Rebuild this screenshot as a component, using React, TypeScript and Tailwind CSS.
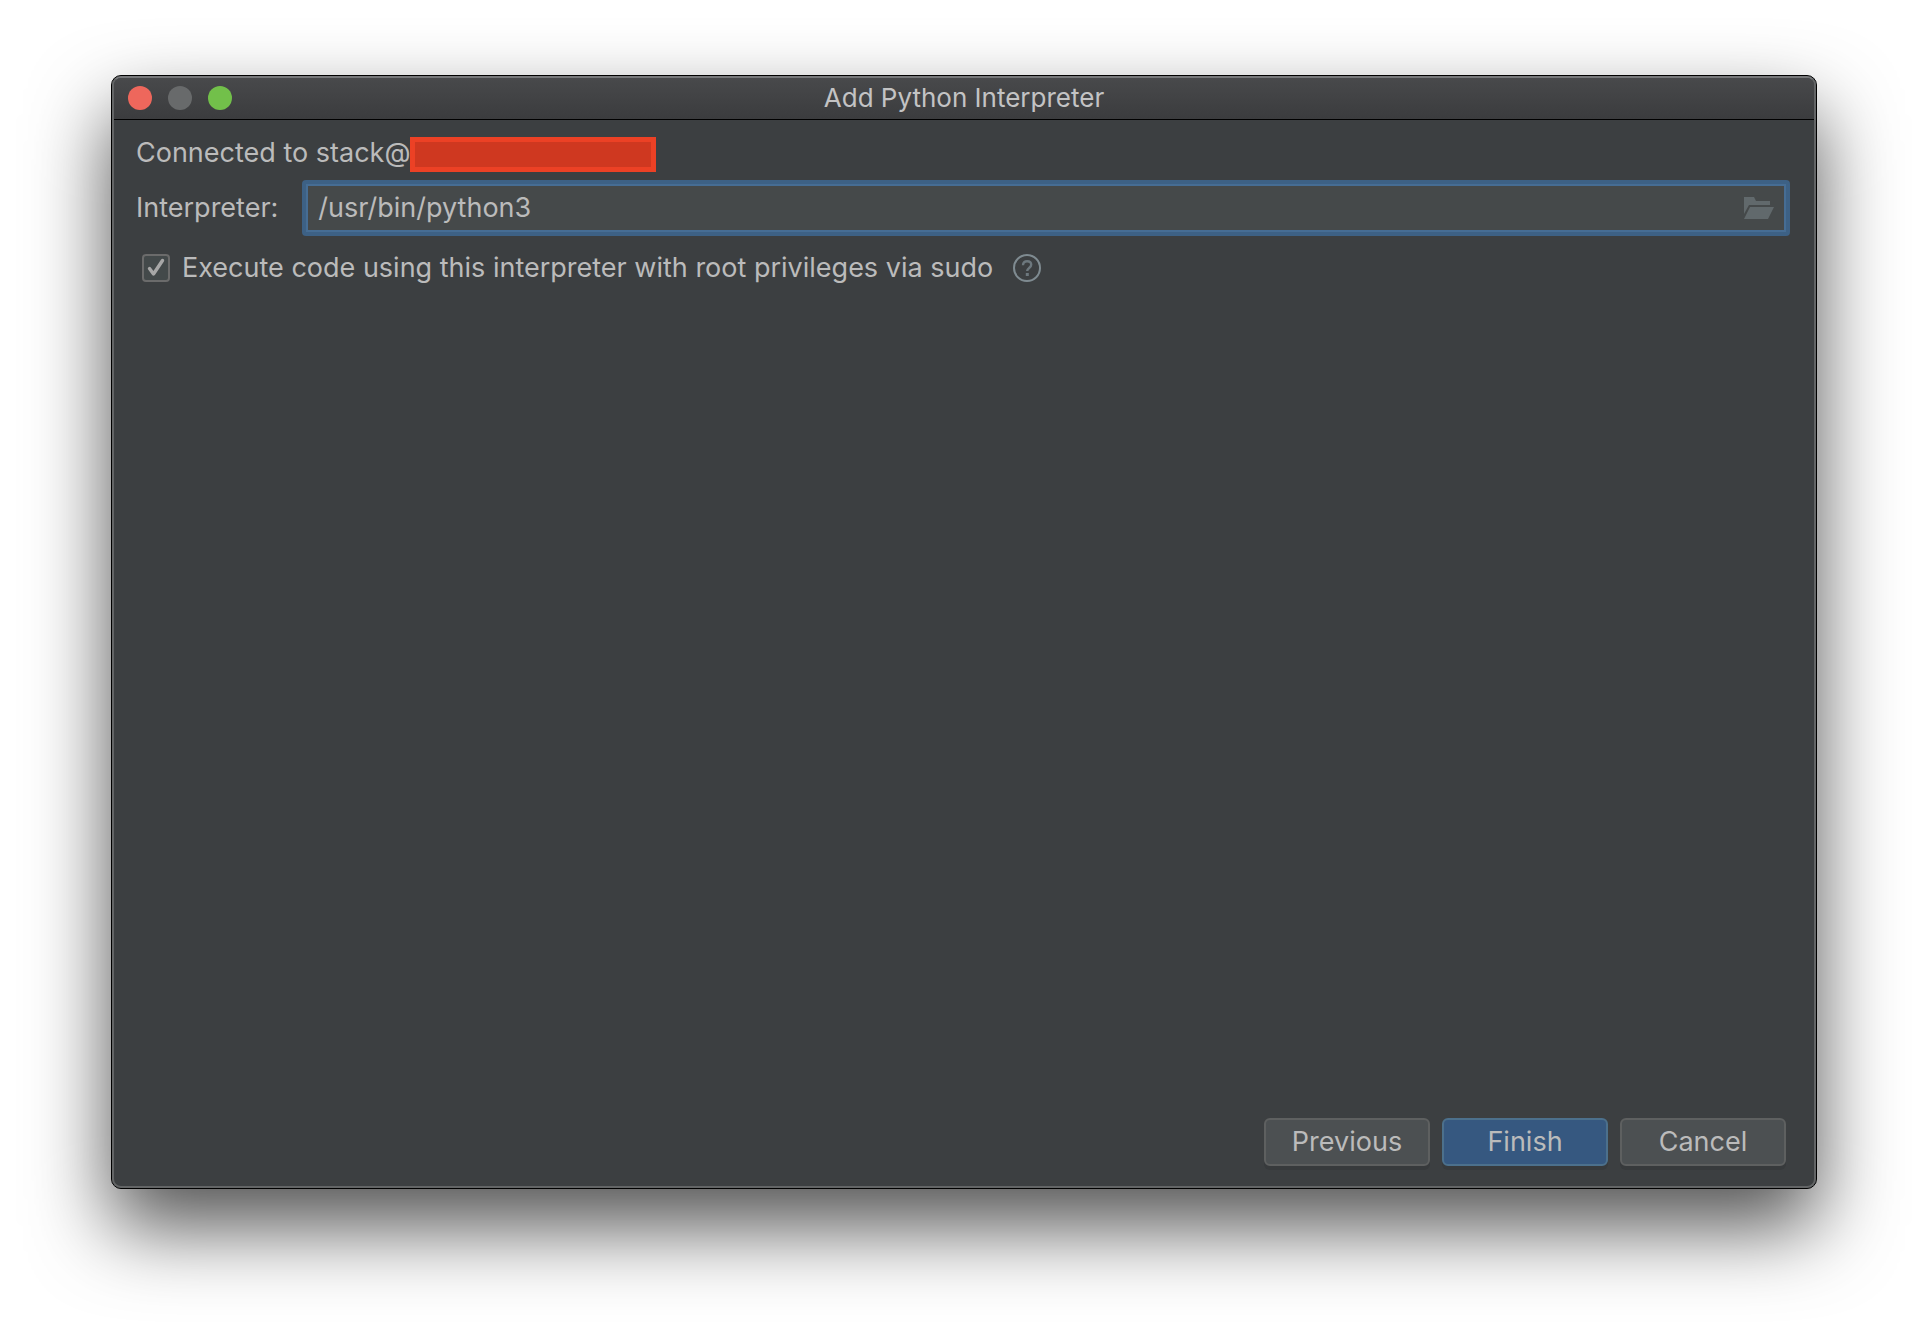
import { useState } from "react";

const FolderIcon = () => (
  <svg width="30" height="22" viewBox="0 0 30 22" fill="#61696c">
    <path d="M0 0h10l2 4h14v4H5L0 17z" />
    <path d="M6 10h24l-6 12H0z" />
  </svg>
);

const HelpIcon = () => (
  <svg width="28" height="28" viewBox="0 0 28 28" fill="none">
    <circle cx="14" cy="14" r="13" stroke="#7f8b91" strokeWidth="2" />
    <path
      d="M10 11.2C10 8.600 11.700 7.200 14.100 7.200s4.100 1.400 4.100 3.600c0 3.200-4 3.200-4 6.200"
      stroke="#6d787e"
      strokeWidth="2.400"
    />
    <rect x="12.800" y="19" width="3" height="3" fill="#6d787e" />
  </svg>
);

const buttonClass =
  "h-12 w-[166px] rounded-md border-2 border-[#5e6060] bg-[#4c5052] shadow-[0_4px_0_#373a3c]";

export default function App() {
  const [path, setPath] = useState("/usr/bin/python3");
  const [sudo, setSudo] = useState(true);

  return (
    <main className="flex min-h-screen bg-white px-[111px] pt-[75px] pb-[147px] font-['Inter',sans-serif] text-[27px] leading-8 text-[#bbbbbb]">
      <div className="flex flex-1 flex-col rounded-[10px] border border-black bg-[#3c3f41] shadow-[0_38px_80px_rgba(0,0,0,0.68)]">
        <div className="flex flex-1 flex-col overflow-hidden rounded-[9px] border-2 border-[#636566] border-t-[#77787a]">
          {/*Title bar*/}
          <header className="grid h-[42px] grid-cols-[1fr_auto_1fr] items-center border-b border-black bg-linear-to-b from-[#48494b] to-[#3b3c3e] px-3.5 pb-px">
            <div className="flex gap-4">
              <button
                aria-label="Close"
                className="size-6 rounded-full bg-[#ee675c]"
              />
              <button
                aria-label="Minimize"
                className="size-6 rounded-full bg-[#686a6b]"
              />
              <button
                aria-label="Zoom"
                className="size-6 rounded-full bg-[#72c04a]"
              />
            </div>
            <h1 className="text-[26px] text-[#c3c3c4]">
              Add Python Interpreter
            </h1>
          </header>

          {/*Form*/}
          <form
            className="flex flex-1 flex-col pt-[17px] pr-6 pb-5 pl-[22px]"
            onSubmit={(e) => e.preventDefault()}
          >
            <div className="flex items-start">
              <span>Connected to stack@</span>
              <span className="h-[35px] w-[246px] border-[5px] border-[#ec4125] bg-[#cf3820]" />
            </div>

            <div className="mt-2 flex items-center gap-6">
              <label htmlFor="interpreter">Interpreter:</label>
              <div className="flex flex-1 rounded-sm bg-[#3d6185] p-1">
                <div className="flex h-12 flex-1 items-center border-2 border-[#466d94] bg-[#45494a] pr-2.5">
                  <input
                    id="interpreter"
                    type="text"
                    value={path}
                    onChange={(e) => setPath(e.target.value)}
                    className="min-w-0 flex-1 px-2.5 outline-0"
                  />
                  <button type="button" aria-label="Browse">
                    <FolderIcon />
                  </button>
                </div>
              </div>
            </div>

            <div className="mt-4 flex items-center pl-1.5">
              <div className="relative size-7">
                <input
                  id="sudo"
                  type="checkbox"
                  checked={sudo}
                  onChange={(e) => setSudo(e.target.checked)}
                  className="peer block size-7 appearance-none rounded-sm border-2 border-[#6b6b6b] bg-[#43494a]"
                />
                <svg
                  className="pointer-events-none absolute inset-0 hidden peer-checked:block"
                  viewBox="0 0 28 28"
                  fill="none"
                  stroke="#a7a7a7"
                  strokeWidth="3.400"
                >
                  <path
                    d="M7.500 14.500l4 5.500L20.500 6.500"
                    strokeLinecap="round"
                    strokeLinejoin="round"
                  />
                </svg>
              </div>
              <label htmlFor="sudo" className="ml-3">
                Execute code using this interpreter with root privileges via
                sudo
              </label>
              <button type="button" aria-label="Help" className="ml-5">
                <HelpIcon />
              </button>
            </div>

            <div className="mt-auto flex justify-end gap-3 pr-1">
              <button type="button" className={buttonClass}>
                Previous
              </button>
              <button
                type="submit"
                className="h-12 w-[166px] rounded-md border-2 border-[#4c708c] bg-[#365880] shadow-[0_4px_0_#373a3c]"
              >
                Finish
              </button>
              <button type="button" className={buttonClass}>
                Cancel
              </button>
            </div>
          </form>
        </div>
      </div>
    </main>
  );
}
